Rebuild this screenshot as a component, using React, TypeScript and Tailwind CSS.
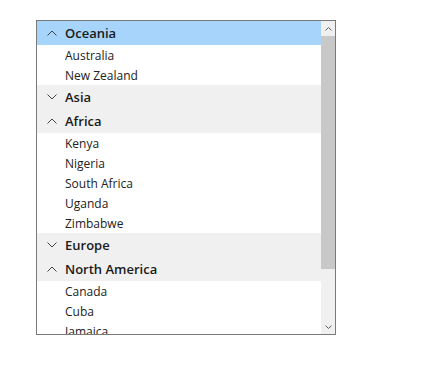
import React from 'react';

type Group = { name: string; open: boolean; items: string[]; selected?: boolean };

const groups: Group[] = [
  { name: 'Oceania', open: true, selected: true, items: ['Australia', 'New Zealand'] },
  { name: 'Asia', open: false, items: [] },
  { name: 'Africa', open: true, items: ['Kenya', 'Nigeria', 'South Africa', 'Uganda', 'Zimbabwe'] },
  { name: 'Europe', open: false, items: [] },
  { name: 'North America', open: true, items: ['Canada', 'Cuba', 'Jamaica'] },
];

function Chevron({ up }: { up: boolean }) {
  return (
    <svg width="10" height="6" viewBox="0 0 10 6" className="shrink-0">
      <path
        d={up ? 'M0.5 5.5L5 1L9.5 5.5' : 'M0.5 0.5L5 5L9.5 0.5'}
        fill="none"
        stroke="#444"
        strokeWidth="1"
      />
    </svg>
  );
}

export default function App() {
  return (
    <div className="w-[441px] h-[366px] bg-white" style={{ fontFamily: '"Segoe UI", "Open Sans", sans-serif' }}>
      <div className="pt-[20px] pl-[36px]">
        <div className="w-[300px] h-[315px] border border-[#7a7a7a] flex">
          <div className="flex-1 overflow-hidden">
            {groups.map((g) => (
              <div key={g.name}>
                <div
                  className={`h-[24px] flex items-center pl-[10px] gap-[8px] text-[13px] font-[560] text-[#1a1a1a] ${
                    g.selected ? 'bg-[#a6d4fa]' : 'bg-[#f0f0f0]'
                  }`}
                >
                  <Chevron up={g.open} />
                  <span className="pt-[1px]">{g.name}</span>
                </div>
                {g.open &&
                  g.items.map((it) => (
                    <div key={it} className="h-[20px] flex items-center pl-[28px] pt-[1px] text-[12px] text-[#222]">
                      {it}
                    </div>
                  ))}
              </div>
            ))}
          </div>
          <div className="w-[14px] bg-[#f0f0f0] flex flex-col">
            <div className="h-[15px] flex items-center justify-center">
              <svg width="7" height="4" viewBox="0 0 7 4">
                <path d="M0.5 3.5L3.5 0.5L6.5 3.5" fill="none" stroke="#606060" strokeWidth="1" />
              </svg>
            </div>
            <div className="h-[233px] bg-[#c8c8c8]" />
            <div className="flex-1" />
            <div className="h-[15px] flex items-center justify-center">
              <svg width="7" height="4" viewBox="0 0 7 4">
                <path d="M0.5 0.5L3.5 3.5L6.5 0.5" fill="none" stroke="#606060" strokeWidth="1" />
              </svg>
            </div>
          </div>
        </div>
      </div>
    </div>
  );
}
